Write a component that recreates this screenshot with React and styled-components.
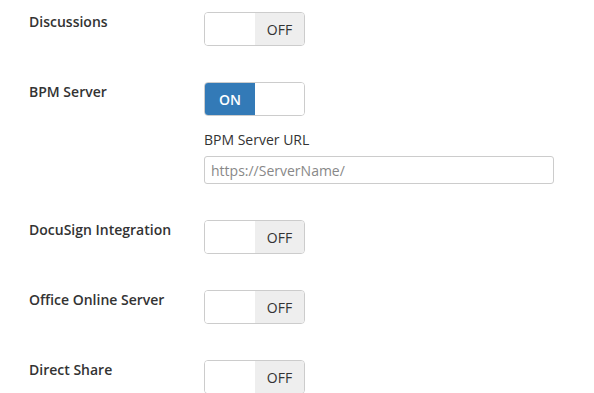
import React from 'react'
import styled, { createGlobalStyle } from 'styled-components'

const GlobalStyle = createGlobalStyle`
  html, body {
    margin: 0;
    padding: 0;
    background: #ffffff;
    font-family: "Open Sans", "Liberation Sans", sans-serif;
    color: #333333;
  }
`

const settings = [
  { label: 'Discussions', on: false },
  { label: 'BPM Server', on: true, url: true },
  { label: 'DocuSign Integration', on: false },
  { label: 'Office Online Server', on: false },
  { label: 'Direct Share', on: false },
]

function App() {
  return (
    <>
      <GlobalStyle />
      <Page>
        {settings.map((s) => (
          <Row key={s.label}>
            <Label>{s.label}</Label>
            <Field>
              <Switch>
                {s.on ? (
                  <>
                    <OnPart>ON</OnPart>
                    <Handle />
                  </>
                ) : (
                  <>
                    <Handle />
                    <OffPart>OFF</OffPart>
                  </>
                )}
              </Switch>
              {s.url && (
                <SubField>
                  <SubLabel>BPM Server URL</SubLabel>
                  <Input placeholder="https://ServerName/" />
                </SubField>
              )}
            </Field>
          </Row>
        ))}
      </Page>
    </>
  )
}

export default App

const Page = styled.div`
  padding: 12px 0 0 29px;
  display: flex;
  flex-direction: column;
  gap: 36px;
`
const Row = styled.div`
  display: flex;
  align-items: flex-start;
`
const Label = styled.div`
  width: 175px;
  flex-shrink: 0;
  font-size: 14px;
  font-weight: 600;
  line-height: 20px;
  color: #333333;
`
const Field = styled.div`
  display: flex;
  flex-direction: column;
`
const Switch = styled.div`
  display: flex;
  width: 101px;
  height: 34px;
  box-sizing: border-box;
  border: 1px solid #cccccc;
  border-radius: 4px;
  overflow: hidden;
`
const Handle = styled.div`
  flex: 1;
  background: #ffffff;
`
const OffPart = styled.div`
  width: 49px;
  display: flex;
  align-items: center;
  justify-content: center;
  background: #eeeeee;
  color: #333333;
  font-size: 14px;
`
const OnPart = styled.div`
  width: 50px;
  display: flex;
  align-items: center;
  justify-content: center;
  background: #337ab7;
  color: #ffffff;
  font-size: 14px;
  font-weight: 600;
`
const SubField = styled.div`
  margin-top: 14px;
  display: flex;
  flex-direction: column;
  gap: 7px;
`
const SubLabel = styled.div`
  font-size: 14px;
  line-height: 19px;
  color: #333333;
`
const Input = styled.input`
  width: 350px;
  height: 28px;
  box-sizing: border-box;
  border: 1px solid #cccccc;
  border-radius: 3px;
  padding: 0 6px;
  font-family: "Open Sans", "Liberation Sans", sans-serif;
  font-size: 14px;
  color: #333333;
  &::placeholder {
    color: #888888;
  }
`
